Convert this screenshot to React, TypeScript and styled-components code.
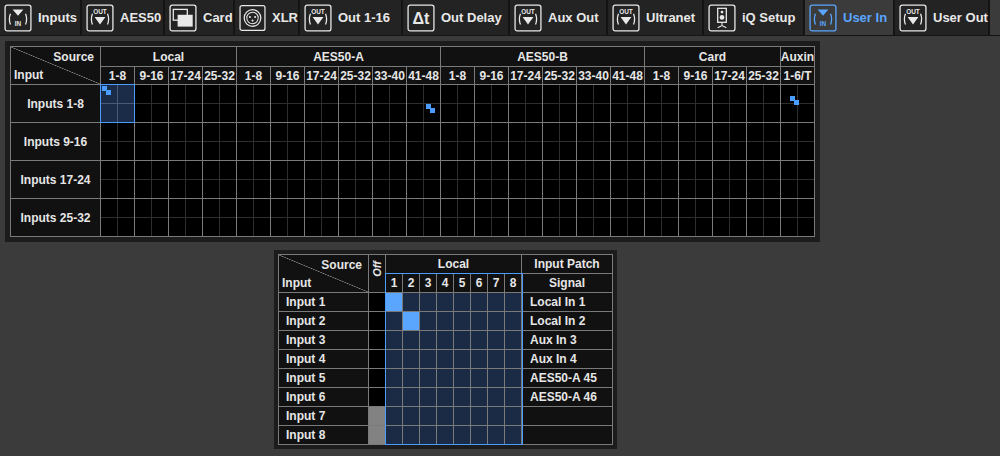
import React from "react";
import styled, { createGlobalStyle } from "styled-components";

const Global = createGlobalStyle`
  html, body { margin: 0; padding: 0; background: #3b3b3b; }
  body { font-family: "Liberation Sans", Arial, sans-serif; font-weight: bold; color: #e6e6e6; }
`;

const Page = styled.div`
  width: 1000px; height: 456px; overflow: hidden; background: #3b3b3b;
  display: flex; flex-direction: column;
`;
const TabBar = styled.div`
  display: flex; height: 35px; background: #232323; border-bottom: 1px solid #141414;
`;
const Tab = styled.div<{ $active?: boolean; $w: number }>`
  width: ${p => p.$w}px; box-sizing: border-box; display: flex; align-items: center; gap: 6px;
  padding-left: 4px; font-size: 13px; border-right: 2px solid #141414;
  background: ${p => (p.$active ? "#3b3b3b" : "#232323")};
  color: ${p => (p.$active ? "#5aa6ff" : "#e8e8e8")};
`;
const Filler = styled.div`flex: 1; background: #3b3b3b;`;

const Icon = ({ kind, color }: { kind: string; color: string }) => (
  <svg width="28" height="28" viewBox="0 0 26 26">
    <rect x="1" y="1" width="24" height="24" rx="2" fill="none" stroke={color} strokeWidth="1.2" />
    {kind === "in" && (
      <>
        <path d="M8 5 L18 5 L13 11 Z" fill={color} />
        <text x="13" y="20" fontSize="6" fill={color} textAnchor="middle" fontFamily="Liberation Sans">IN</text>
        <path d="M6 9 Q4 14 6 19 M20 9 Q22 14 20 19" stroke={color} fill="none" strokeWidth="1.2" />
      </>
    )}
    {kind === "out" && (
      <>
        <text x="13" y="9" fontSize="6" fill={color} textAnchor="middle" fontFamily="Liberation Sans">OUT</text>
        <path d="M8 12 L18 12 L13 19 Z" fill={color} />
        <path d="M6 9 Q4 14 6 19 M20 9 Q22 14 20 19" stroke={color} fill="none" strokeWidth="1.2" />
      </>
    )}
    {kind === "card" && (
      <>
        <rect x="4" y="5" width="13" height="10" fill="none" stroke={color} strokeWidth="1.2" />
        <rect x="8" y="10" width="14" height="11" fill={color} />
      </>
    )}
    {kind === "xlr" && (
      <>
        <circle cx="13" cy="13" r="8" fill="none" stroke={color} strokeWidth="1.2" />
        <circle cx="13" cy="13" r="5.5" fill="none" stroke={color} strokeWidth="1" />
        <circle cx="10.5" cy="12" r="1" fill={color} /><circle cx="15.5" cy="12" r="1" fill={color} /><circle cx="13" cy="15.5" r="1" fill={color} />
      </>
    )}
    {kind === "delay" && (
      <text x="13" y="19" fontSize="15" fill={color} textAnchor="middle" fontFamily="Liberation Sans">Δt</text>
    )}
    {kind === "iq" && (
      <>
        <rect x="9" y="4" width="8" height="13" fill="none" stroke={color} strokeWidth="1.2" />
        <circle cx="13" cy="7.5" r="1.3" fill={color} /><circle cx="13" cy="12.5" r="2.2" fill={color} />
        <path d="M13 17 L13 20 M9 22 L13 20 L17 22" stroke={color} fill="none" />
      </>
    )}
  </svg>
);

const tabs = [
  { t: "Inputs", k: "in", w: 82 }, { t: "AES50", k: "out", w: 83 }, { t: "Card", k: "card", w: 70 },
  { t: "XLR", k: "xlr", w: 65 }, { t: "Out 1-16", k: "out", w: 103 }, { t: "Out Delay", k: "delay", w: 107 },
  { t: "Aux Out", k: "out", w: 98 }, { t: "Ultranet", k: "out", w: 96 }, { t: "iQ Setup", k: "iq", w: 101 },
  { t: "User In", k: "in", w: 90, a: true }, { t: "User Out", k: "out", w: 95 },
];

const Body = styled.div`
  display: flex; flex-direction: column; align-items: flex-start; padding: 5px 0 0 5px; gap: 8px;
`;
const Frame = styled.div`
  background: #1c1c1c; padding: 5px; position: relative;
`;
const BigGrid = styled.div`
  display: grid; grid-template-columns: 89px repeat(21, 33px); grid-template-rows: 19px 17px repeat(4, 37px);
  gap: 1px; padding: 1px; background: #7a7a7a; position: relative;
`;
const SmallGrid = styled.div`
  display: grid; grid-template-columns: 89px 16px repeat(8, 16px) 90px; grid-template-rows: repeat(10, 18px);
  gap: 1px; padding: 1px; background: #7a7a7a; position: relative;
`;
const Hd = styled.div<{ $span?: number; $align?: string }>`
  background: #111; font-size: 12px; display: flex; align-items: center;
  justify-content: ${p => p.$align || "center"}; padding: ${p => (p.$align ? "0 6px" : "0")};
  grid-column: span ${p => p.$span || 1}; white-space: nowrap; overflow: hidden;
`;
const Corner = styled.div`
  grid-row: span 2; background: #111; position: relative; font-size: 12px;
  background-image: linear-gradient(to bottom left, transparent calc(50% - 0.6px), #8a8a8a 50%, transparent calc(50% + 0.6px));
`;
const CornerTop = styled.span`position: absolute; right: 6px; top: 3px;`;
const CornerBot = styled.span`position: absolute; left: 3px; bottom: 2px;`;
const RowLabel = styled.div<{ $left?: boolean }>`
  background: #111; font-size: 12px; display: flex; align-items: center;
  justify-content: ${p => (p.$left ? "flex-start" : "center")}; padding-left: ${p => (p.$left ? "7px" : "0")};
`;
const Cell = styled.div<{ $hl?: boolean }>`
  background-color: ${p => (p.$hl ? "#1b2c48" : "#000")}; position: relative;
  background-image: linear-gradient(${p => (p.$hl ? "#4a5a78" : "#2e2e2e")}, ${p => (p.$hl ? "#4a5a78" : "#2e2e2e")}),
    linear-gradient(${p => (p.$hl ? "#4a5a78" : "#2e2e2e")}, ${p => (p.$hl ? "#4a5a78" : "#2e2e2e")});
  background-size: 1px 100%, 100% 1px; background-position: 16px 0, 0 18px; background-repeat: no-repeat;
`;
const Dot = styled.div<{ $x: number; $y: number }>`
  position: absolute; width: 5px; height: 5px; background: #4a9cff; left: ${p => p.$x}px; top: ${p => p.$y}px;
`;
const Blue = styled.div<{ $l: number; $t: number; $w: number; $h: number }>`
  position: absolute; left: ${p => p.$l}px; top: ${p => p.$t}px; width: ${p => p.$w}px; height: ${p => p.$h}px;
  border: 1px solid #4a9cff; box-sizing: border-box; pointer-events: none;
`;
const MCell = styled.div<{ $on?: boolean }>`background: ${p => (p.$on ? "#5aa6ff" : "#1b2a45")};`;
const OffCell = styled.div<{ $gray?: boolean }>`background: ${p => (p.$gray ? "#828282" : "#000")};`;
const OffHd = styled.div`
  grid-row: span 2; background: #111; font-size: 11px; display: flex; align-items: flex-start; justify-content: center;
  padding-top: 4px;
`;
const Rot = styled.span`transform: rotate(-90deg); display: inline-block; margin-top: 4px; font-style: italic;`;
const Sig = styled.div`background: #111; font-size: 12px; display: flex; align-items: center; padding-left: 8px;`;
const SmallFrame = styled(Frame)`margin-left: 269px; padding: 4px;`;

const groups = [["Local", 4], ["AES50-A", 6], ["AES50-B", 6], ["Card", 4], ["Auxin", 1]] as const;
const subs = ["1-8", "9-16", "17-24", "25-32", "1-8", "9-16", "17-24", "25-32", "33-40", "41-48",
  "1-8", "9-16", "17-24", "25-32", "33-40", "41-48", "1-8", "9-16", "17-24", "25-32", "1-6/T"];
const bigRows = ["Inputs 1-8", "Inputs 9-16", "Inputs 17-24", "Inputs 25-32"];
const signals = ["Local In 1", "Local In 2", "Aux In 3", "Aux In 4", "AES50-A 45", "AES50-A 46", "", ""];

export default function App() {
  return (
    <Page>
      <Global />
      <TabBar>
        {tabs.map(t => (
          <Tab key={t.t} $w={t.w} $active={t.a}>
            <Icon kind={t.k} color={t.a ? "#5aa6ff" : "#e8e8e8"} />
            {t.t}
          </Tab>
        ))}
        <Filler />
      </TabBar>
      <Body>
        <Frame>
          <BigGrid>
            <Corner><CornerTop>Source</CornerTop><CornerBot>Input</CornerBot></Corner>
            {groups.map(([g, n]) => <Hd key={g} $span={n}>{g}</Hd>)}
            {subs.map((s, i) => <Hd key={i}>{s}</Hd>)}
            {bigRows.map((r, ri) => (
              <React.Fragment key={r}>
                <RowLabel>{r}</RowLabel>
                {subs.map((_, ci) => (
                  <Cell key={ci} $hl={ri === 0 && ci === 0}>
                    {ri === 0 && ci === 0 && <><Dot $x={1} $y={1} /><Dot $x={5} $y={5} /></>}
                    {ri === 0 && ci === 9 && <><Dot $x={19} $y={19} /><Dot $x={23} $y={23} /></>}
                    {ri === 0 && ci === 20 && <><Dot $x={9} $y={11} /><Dot $x={13} $y={15} /></>}
                  </Cell>
                ))}
              </React.Fragment>
            ))}
            <Blue $l={90} $t={38} $w={35} $h={39} />
          </BigGrid>
        </Frame>
        <SmallFrame>
          <SmallGrid>
            <Corner><CornerTop>Source</CornerTop><CornerBot>Input</CornerBot></Corner>
            <OffHd><Rot>Off</Rot></OffHd>
            <Hd $span={8}>Local</Hd>
            <Hd>Input Patch</Hd>
            {[1, 2, 3, 4, 5, 6, 7, 8].map(n => <Hd key={n}>{n}</Hd>)}
            <Hd>Signal</Hd>
            {signals.map((s, ri) => (
              <React.Fragment key={ri}>
                <RowLabel $left>Input {ri + 1}</RowLabel>
                <OffCell $gray={ri >= 6} />
                {[0, 1, 2, 3, 4, 5, 6, 7].map(ci => <MCell key={ci} $on={ri < 2 && ci === ri} />)}
                <Sig>{s}</Sig>
              </React.Fragment>
            ))}
            <Blue $l={107} $t={19} $w={138} $h={172} />
          </SmallGrid>
        </SmallFrame>
      </Body>
    </Page>
  );
}
